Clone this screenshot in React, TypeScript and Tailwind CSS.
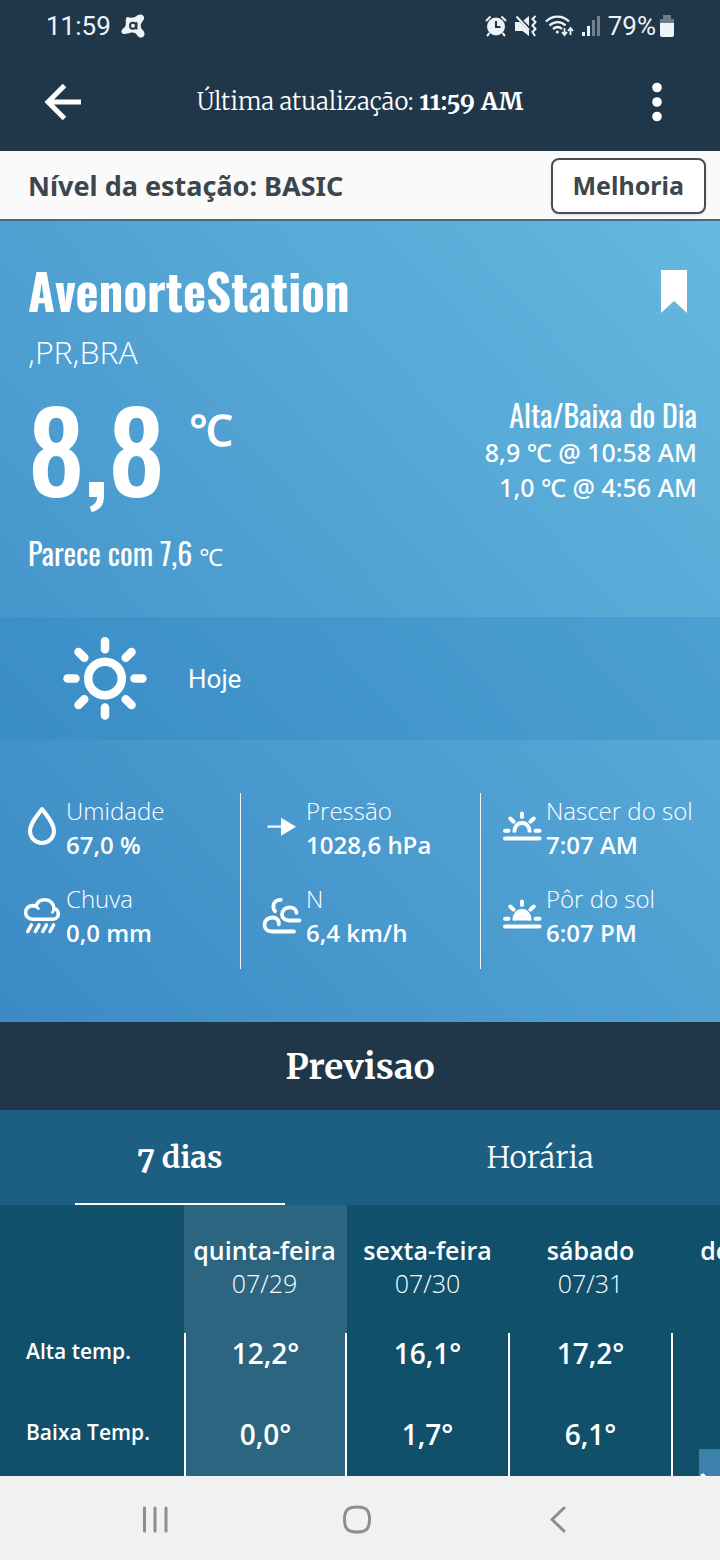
import { useState } from 'react';
import type { ReactNode } from 'react';

const displayFont = "font-['Oswald','Liberation_Sans_Narrow',sans-serif]";
const serifFont = "font-['Merriweather','DejaVu_Serif',serif] [font-feature-settings:'onum']";
const robotoFont = "font-['Roboto',sans-serif]";
const notoFont = "font-['Noto_Sans',sans-serif]";

interface Metric {
  label: string;
  value: string;
  icon: ReactNode;
}

// Weather icons
const DropIcon = () => (
  <svg viewBox="0 0 48 68" className="w-12 h-[68px]" fill="none" stroke="currentColor" strokeWidth="4" strokeLinejoin="round">
    <path d="M24 16c-5.500 7.500-12 14.500-12 22a12 12 0 0 0 24 0c0-7.500-6.500-14.500-12-22z" />
  </svg>
);

const RainIcon = () => (
  <svg viewBox="0 0 48 68" className="w-12 h-[68px]" fill="none" stroke="currentColor" strokeWidth="3.600" strokeLinecap="round" strokeLinejoin="round">
    <path d="M14.500 38.200a6.800 6.800 0 0 1-.3-13.600c1.500 0 2.700.3 3.800 1C19 21.500 22.500 18.800 27 18.800c5 0 8.800 3.800 9 8.800 2.500.4 4.300 2.600 4.300 5.200 0 3-2.200 5.400-5.200 5.400z" />
    <path d="M18 25.600c1 .5 1.900 1.100 2.500 2M36 27.600c-.2 1.800-.8 2.800-1.600 3.800" strokeWidth="2.600" />
    <path d="M13.400 44l-3.600 6.500M21 44l-3.600 6.500M28.400 44l-3.600 6.500M35.600 44L32 50.500" />
  </svg>
);

const PressureIcon = () => (
  <svg viewBox="0 0 48 68" className="w-12 h-[68px]" fill="currentColor">
    <path d="M9.500 32.500h14v2.200h-14z" />
    <path d="M23 24.800l15 9-15 9z" />
  </svg>
);

const WindIcon = () => (
  <svg viewBox="0 0 48 68" className="w-12 h-[68px]" fill="none" stroke="currentColor" strokeWidth="3.800" strokeLinecap="round">
    <path d="M36 50.500H14c-4.600 0-7.500-3-7.500-6.800 0-4.200 3.500-7.200 7.700-7.200 4.300 0 7.200 2.800 6.600 6.800" />
    <path d="M41.500 39.500H31.500c-4.500 0-7.500-2.600-7.500-6 0-4.200 3.400-7.200 7.500-7.200s6.800 2.500 7 5.500" />
    <path d="M22.800 18.800c-4.600 0-7.500 2.600-7.500 6.600 0 2 .7 3.600 1.800 4.800" />
  </svg>
);

const HorizonIcon = ({ filled }: { filled?: boolean }) => (
  <svg viewBox="0 0 48 68" className="w-12 h-[68px]" fill="none" stroke="currentColor" strokeWidth="4" strokeLinecap="round">
    <path d="M7 45.500h34.500M7 37.800h3.500M37.500 37.800h4M24 20.500v3.500M12.300 25.500l3.200 3.200M35.700 25.500l-3.200 3.200" />
    <path
      d="M16.300 39.500c-.3-5.500 3-9.500 7.700-9.500s8 4 7.700 9.500"
      fill={filled ? 'currentColor' : 'none'}
      strokeLinecap="butt"
      strokeWidth="3.800"
    />
  </svg>
);

const SunIcon = () => (
  <svg viewBox="0 0 84 84" className="w-[84px] h-[84px]" fill="none" stroke="currentColor" strokeWidth="8.500" strokeLinecap="round">
    <circle cx="42" cy="41.500" r="16.800" />
    <path d="M42 4.300v8M42 70.500v8M4.500 41.500h8M71.500 41.500h8M15.500 15l5.800 5.800M62.700 62.200l5.800 5.800M15.500 68l5.800-5.800M62.700 20.800l5.800-5.800" />
  </svg>
);

const metricColumns: Metric[][] = [
  [
    { label: 'Umidade', value: '67,0 %', icon: <DropIcon /> },
    { label: 'Chuva', value: '0,0 mm', icon: <RainIcon /> },
  ],
  [
    { label: 'Pressão', value: '1028,6 hPa', icon: <PressureIcon /> },
    { label: 'N', value: '6,4 km/h', icon: <WindIcon /> },
  ],
  [
    { label: 'Nascer do sol', value: '7:07 AM', icon: <HorizonIcon /> },
    { label: 'Pôr do sol', value: '6:07 PM', icon: <HorizonIcon filled /> },
  ],
];

const days = [
  { name: 'quinta-feira', date: '07/29', high: '12,2°', low: '0,0°' },
  { name: 'sexta-feira', date: '07/30', high: '16,1°', low: '1,7°' },
  { name: 'sábado', date: '07/31', high: '17,2°', low: '6,1°' },
  { name: 'domingo', date: '', high: '', low: '' },
];

const rows: { label: string; key: 'high' | 'low' }[] = [
  { label: 'Alta temp.', key: 'high' },
  { label: 'Baixa Temp.', key: 'low' },
];

function StatusBar() {
  return (
    <div className={`flex items-center justify-between h-[52px] px-[46px] text-[26px] text-[#eef3f6] ${robotoFont}`}>
      <div className="flex items-center gap-2.5">
        <span>11:59</span>
        <svg viewBox="0 0 24 24" className="w-6 h-6">
          <path
            d="M5.500 3.500C6.300 2.600 7.500 3 8.400 3.400c2 .8 4.300.3 6.400-1C16.500 1.200 18 .2 20 .5c2.800.4 4 3.600 2.300 5.700-1.500 2-2.600 3.500-2.600 5.700 0 2 1 3.200 2.400 4.700 1.800 1.900 1.900 4.700.1 6.100-2.200 1.700-4.700.7-5.900-1.300-1.300-2.400-4-3.300-7-2.600-2.200.5-4.300 1.500-6.500 1.200C.6 19.700-.3 17.600.9 16c1.300-1.600 3.300-2.800 3.800-5 .4-2.300-.5-5.500.8-7.500z"
            fill="currentColor"
          />
          <circle cx="12" cy="11.700" r="3" fill="none" stroke="#20374a" strokeWidth="2" />
          <path d="M15.500 8.200v7.200" stroke="#20374a" strokeWidth="2" />
        </svg>
      </div>
      <div className="flex items-center gap-2">
        <svg viewBox="0 0 22 22" className="w-[22px] h-[22px]" fill="none" stroke="currentColor">
          <circle cx="11" cy="11.500" r="9" fill="currentColor" stroke="none" />
          <path d="M1 6l4.500-4.500M21 6l-4.500-4.500M4.500 18L2 21M17.500 18l2.500 3" strokeWidth="2" />
          <path d="M11 6v6h4.500" stroke="#20374a" strokeWidth="2" />
        </svg>
        <svg viewBox="0 0 22 22" className="w-[22px] h-[22px]" fill="none" stroke="currentColor">
          <path d="M0 7h5l9 9v5l-6.500-5H0zM14 1v10L8.500 5.500z" fill="currentColor" stroke="none" />
          <path d="M1.500 1.500L14 15" strokeWidth="2" />
          <path d="M20.500 1l-3 3 3 3-3 3.500 3 3.500-3 3 2.500 4" strokeWidth="2" />
        </svg>
        <svg viewBox="0 0 29 22" className="w-[29px] h-[22px]" fill="none" stroke="currentColor" strokeWidth="2.400">
          <path d="M1 6.500c6.500-6.500 16.500-6.500 23 0M4.500 10.500c5-4.500 11.500-4.500 16 0M8 14c3-2.500 6.500-2.500 9 0" />
          <circle cx="12.300" cy="17" r="1.500" fill="currentColor" stroke="none" />
          <path d="M19.500 13v6M17 17l2.500 3 2.500-3M25.500 20v-6M23 16l2.500-3 2.500 3" strokeWidth="1.800" />
        </svg>
        <div className="flex items-end gap-0.5 h-5">
          <span className="w-[3px] h-1 bg-current" />
          <span className="w-[3px] h-2.5 bg-current" />
          <span className="w-[3px] h-4 bg-current opacity-40" />
          <span className="w-[3px] h-5 bg-current opacity-40" />
        </div>
        <span>79%</span>
        <div className="flex flex-col items-center -ml-1">
          <span className="w-2 h-1 bg-[#6c7d8a]" />
          <span className="w-3.5 h-1 bg-[#6c7d8a]" />
          <span className="w-3.5 h-3.5 bg-current rounded-b-xs" />
        </div>
      </div>
    </div>
  );
}

export default function App() {
  const [tab, setTab] = useState<'daily' | 'hourly'>('daily');

  return (
    <div className="h-screen flex flex-col overflow-hidden bg-[#11506b] text-white font-['Open_Sans','Noto_Sans',sans-serif]">
      {/* Header */}
      <header className="shrink-0 bg-[#20374a]">
        <StatusBar />
        <div className="flex items-center justify-between h-[99px] px-[43px]">
          <button type="button" aria-label="Voltar" className="w-10">
            <svg viewBox="0 0 40 40" className="w-10 h-10" fill="none" stroke="currentColor" strokeWidth="5">
              <path d="M38 20H6M21.500 3.500L5 20l16.500 16.500" />
            </svg>
          </button>
          <p className={`pt-px text-2xl ${serifFont}`}>
            <span className="font-light">Última atualização:</span> <b>11:59 AM</b>
          </p>
          <button type="button" aria-label="Mais opções" className="flex justify-center w-10">
            <svg viewBox="0 0 10 40" className="w-2.5 h-10" fill="currentColor">
              <circle cx="5" cy="5.500" r="4.800" />
              <circle cx="5" cy="20" r="4.800" />
              <circle cx="5" cy="34.500" r="4.800" />
            </svg>
          </button>
        </div>
      </header>

      <main className="flex-1 min-h-0 overflow-hidden">
        <div className={`flex items-center justify-between h-[70px] pt-0.5 pl-7 pr-3.5 bg-[#fafafb] border-b-2 border-[#49687c] text-[#3c464d] ${notoFont}`}>
          <p className="text-[27px] font-bold">Nível da estação: BASIC</p>
          <button type="button" className="h-14 px-5 text-[25px] font-bold bg-white border-2 border-[#464e54] rounded-lg shadow-sm">
            Melhoria
          </button>
        </div>

        {/* Current conditions */}
        <section className="bg-linear-to-bl from-[#65b8df] to-[#3b8ac5]">
          <div className="h-[396px] pl-7 pr-[23px] pt-[38px]">
            <div className="flex justify-between items-start">
              <h1 className={`text-[49px] leading-[62px] font-bold ${displayFont}`}>AvenorteStation</h1>
              <button type="button" aria-label="Favorito" className="mt-2.5 mr-2.5">
                <svg viewBox="0 0 26 44" className="w-[26px] h-11" fill="currentColor">
                  <path d="M0 1h26v43L13 32 0 44z" />
                </svg>
              </button>
            </div>
            <p className="text-[32px] leading-[62px] font-light">,PR,BRA</p>
            <div className="flex justify-between items-start pt-3">
              <p className={`flex items-start font-medium ${displayFont}`}>
                <span className="text-[111px] leading-[104px]">8,8</span>
                <span className={`ml-6 text-[44px] leading-[68px] font-semibold ${notoFont}`}>℃</span>
              </p>
              <div className={`text-right text-[25px] leading-[35px] font-medium ${notoFont}`}>
                <p className={`text-[30px] leading-10 font-normal ${displayFont}`}>Alta/Baixa do Dia</p>
                <p>8,9 ℃ @ 10:58 AM</p>
                <p>1,0 ℃ @ 4:56 AM</p>
              </div>
            </div>
            <p className={`mt-7 text-[30px] leading-10 ${displayFont}`}>
              Parece com 7,6 <span className={`text-2xl font-normal ${notoFont}`}>℃</span>
            </p>
          </div>

          <div className={`flex items-center h-[123px] pl-[63px] gap-[41px] bg-[#2a80c0]/30 ${robotoFont}`}>
            <SunIcon />
            <span className="pt-0.5 text-[26px]">Hoje</span>
          </div>

          <div className="grid grid-cols-3 py-[53px]">
            {metricColumns.map((column, i) => (
              <div key={i} className={`border-l ${i > 0 ? 'border-white/90' : 'border-transparent'}`}>
                {column.map((m) => (
                  <div key={m.label} className="flex h-[88px] pl-[17px]">
                    {m.icon}
                    <div className="pt-px text-2xl leading-[34px] whitespace-nowrap">
                      <p className="font-light">{m.label}</p>
                      <p className="font-semibold">{m.value}</p>
                    </div>
                  </div>
                ))}
              </div>
            ))}
          </div>
        </section>

        {/* Forecast */}
        <section>
          <h2 className={`h-[88px] leading-[90px] text-center text-[35px] font-bold bg-[#20374a] ${serifFont}`}>Previsao</h2>
          <div role="tablist" className={`grid grid-cols-2 h-[95px] text-[30px] bg-[#1d5e83] ${serifFont}`}>
            <button
              type="button"
              role="tab"
              aria-selected={tab === 'daily'}
              onClick={() => setTab('daily')}
              className={`w-7/12 mx-auto pt-0.5 border-b-2 ${tab === 'daily' ? 'font-bold border-white' : 'font-light border-transparent'}`}
            >
              7 dias
            </button>
            <button
              type="button"
              role="tab"
              aria-selected={tab === 'hourly'}
              onClick={() => setTab('hourly')}
              className={`w-7/12 mx-auto pt-0.5 border-b-2 ${tab === 'hourly' ? 'font-bold border-white' : 'font-light border-transparent'}`}
            >
              Horária
            </button>
          </div>
          <div className="relative overflow-hidden bg-[#11506b]">
            <table className="table-fixed border-separate border-spacing-0 w-[836px] text-center">
              <thead>
                <tr className="h-32 align-top">
                  <td className="w-[184px]" />
                  {days.map((d, i) => (
                    <th key={d.name} scope="col" className={`w-[163px] pt-[29px] pr-0.5 text-[25px] leading-[33px] ${i === 0 ? 'bg-[#2c6580]' : ''}`}>
                      <p className="font-semibold">{d.name}</p>
                      <p className="font-light">{d.date}</p>
                    </th>
                  ))}
                </tr>
              </thead>
              <tbody>
                {rows.map((row) => (
                  <tr key={row.key} className="h-[81px] align-top">
                    <th scope="row" className="pl-[26px] text-left text-[21px] leading-9 font-semibold">{row.label}</th>
                    {days.map((d, i) => (
                      <td key={d.name} className={`text-[28px] leading-10 font-semibold border-r-2 border-white ${i === 0 ? 'bg-[#2c6580] border-l-2' : ''}`}>
                        {d[row.key]}
                      </td>
                    ))}
                  </tr>
                ))}
              </tbody>
            </table>
            <button type="button" aria-label="Próximos dias" className="absolute right-0 top-[244px] w-[21px] h-[46px] bg-[#3b81ab]">
              <svg viewBox="0 0 21 46" className="w-[21px] h-[46px]" fill="none" stroke="currentColor" strokeWidth="3">
                <path d="M2 27l2-1 8 8-8 8" />
              </svg>
            </button>
          </div>
        </section>
      </main>

      {/* System navigation */}
      <nav className="shrink-0 flex items-center justify-between h-[84px] pt-0.5 pl-[135px] pr-[142px] bg-[#f1f1f1] text-[#8d8d8d]">
        <button type="button" aria-label="Recentes">
          <svg viewBox="0 0 40 40" className="w-10 h-10" fill="none" stroke="currentColor" strokeWidth="3" strokeLinecap="round">
            <path d="M9.500 9v23M20 9v23M31 9v23" />
          </svg>
        </button>
        <button type="button" aria-label="Início">
          <svg viewBox="0 0 40 40" className="w-10 h-10" fill="none" stroke="currentColor" strokeWidth="3">
            <path d="M20 8c9 0 12.500 3 12.500 12.500S29 33 20 33 7.500 30 7.500 20.500 11 8 20 8z" />
          </svg>
        </button>
        <button type="button" aria-label="Voltar ao sistema">
          <svg viewBox="0 0 40 40" className="w-10 h-10" fill="none" stroke="currentColor" strokeWidth="3" strokeLinecap="round" strokeLinejoin="round">
            <path d="M26 9L14 20.500 26 32" />
          </svg>
        </button>
      </nav>
    </div>
  );
}
